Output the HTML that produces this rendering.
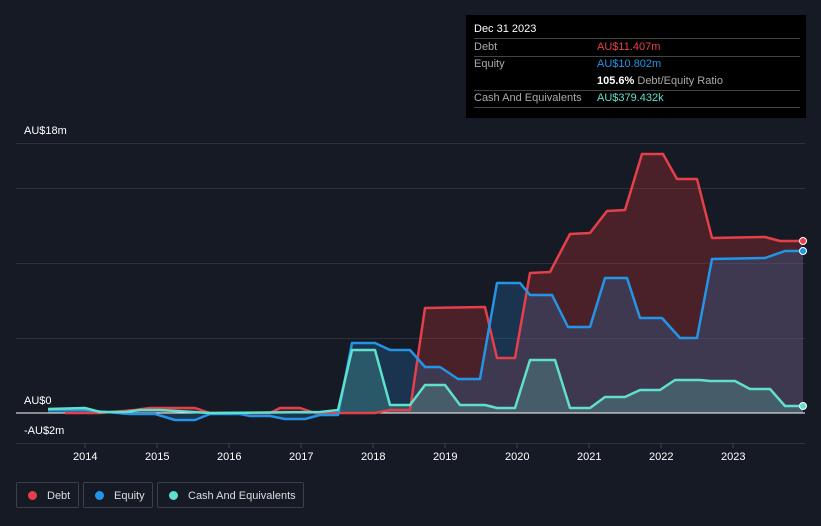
<!DOCTYPE html>
<html><head><style>
body{margin:0;width:821px;height:526px;background:#151a25;font-family:"Liberation Sans",sans-serif;overflow:hidden;position:relative;color:#fff}
.t{position:absolute;font-size:11px}
.tip{position:absolute;left:466px;top:15px;width:340px;height:103px;background:#000;}
.row{position:absolute;left:8px;width:326px;border-bottom:1px solid #444;font-size:11px;height:17px;line-height:17px}
.lab{color:#aaa;position:absolute;left:0}
.val{position:absolute;left:123px}
.leg{position:absolute;top:482px;height:26px;border:1px solid #3a3f4a;border-radius:2px;font-size:11px;color:#ddd;line-height:26px;box-sizing:border-box}
.dot{display:inline-block;width:9px;height:9px;border-radius:50%;margin:0 10px 0 11px;vertical-align:-1px}
</style></head><body>
<svg width="821" height="526" style="position:absolute;left:0;top:0">
<g stroke="#2c313c" stroke-width="1">
<line x1="16" y1="143.5" x2="805" y2="143.5"/><line x1="16" y1="188.5" x2="805" y2="188.5"/><line x1="16" y1="263.5" x2="805" y2="263.5"/><line x1="16" y1="338.5" x2="805" y2="338.5"/><line x1="16" y1="443.5" x2="805" y2="443.5"/>
</g>
<g stroke="#444" ><line x1="85" y1="443" x2="85" y2="448"/><line x1="157" y1="443" x2="157" y2="448"/><line x1="229" y1="443" x2="229" y2="448"/><line x1="301" y1="443" x2="301" y2="448"/><line x1="373" y1="443" x2="373" y2="448"/><line x1="445" y1="443" x2="445" y2="448"/><line x1="517" y1="443" x2="517" y2="448"/><line x1="589" y1="443" x2="589" y2="448"/><line x1="661" y1="443" x2="661" y2="448"/><line x1="733" y1="443" x2="733" y2="448"/></g>
<polygon fill="rgba(200,50,50,0.3)" points="65,413 100,413 135,410 150,408 195,408 210,413 270,413 280,408 300,408 315,413 375,413 390,410 410,410 425,308 485,307 497,358 515,358 530,273 550,272 570,234 590,233 607,211 625,210 642,154 663,154 677,179 697,179 712,238 765,237 780,241 803,241 803,413"/>
<polygon fill="rgba(40,110,180,0.3)" points="48,410 85,410 95,411 130,414 155,414 175,420 195,420 210,414 240,414 250,416 270,416 285,419 305,419 320,415 338,415 352,343 375,343 390,350 410,350 425,367 440,367 458,379 480,379 497,283 520,283 530,295 552,295 568,327 590,327 605,278 627,278 640,318 662,318 680,338 697,338 712,259 765,258 785,251 803,251 803,413 48,413"/>
<polygon fill="rgba(90,200,180,0.25)" points="48,409 85,408 100,412 125,412 140,410 160,410 210,413 320,412 338,410 352,350 375,350 390,405 410,405 425,385 445,385 460,405 485,405 497,408 515,408 530,360 555,360 570,408 590,408 605,397 625,397 640,390 660,390 675,380 700,380 710,381 735,381 750,389 770,389 785,406 803,406 803,413 48,413"/>
<line x1="16" y1="413" x2="805" y2="413" stroke="#fff" stroke-width="1"/>
<g fill="none" stroke-width="2.5" stroke-linejoin="round">
<polyline stroke="#e5404a" points="65,413 100,413 135,410 150,408 195,408 210,413 270,413 280,408 300,408 315,413 375,413 390,410 410,410 425,308 485,307 497,358 515,358 530,273 550,272 570,234 590,233 607,211 625,210 642,154 663,154 677,179 697,179 712,238 765,237 780,241 803,241"/>
<polyline stroke="#2394e6" points="48,410 85,410 95,411 130,414 155,414 175,420 195,420 210,414 240,414 250,416 270,416 285,419 305,419 320,415 338,415 352,343 375,343 390,350 410,350 425,367 440,367 458,379 480,379 497,283 520,283 530,295 552,295 568,327 590,327 605,278 627,278 640,318 662,318 680,338 697,338 712,259 765,258 785,251 803,251"/>
<polyline stroke="#5fe0cc" points="48,409 85,408 100,412 125,412 140,410 160,410 210,413 320,412 338,410 352,350 375,350 390,405 410,405 425,385 445,385 460,405 485,405 497,408 515,408 530,360 555,360 570,408 590,408 605,397 625,397 640,390 660,390 675,380 700,380 710,381 735,381 750,389 770,389 785,406 803,406"/>
</g>
<circle cx="803" cy="241" r="3.5" fill="#e5404a" stroke="#fff" stroke-width="1"/>
<circle cx="803" cy="251" r="3.5" fill="#2394e6" stroke="#fff" stroke-width="1"/>
<circle cx="803" cy="406" r="3.5" fill="#5fe0cc" stroke="#fff" stroke-width="1"/>
</svg>
<div class="t" style="left:24px;top:125px">AU$18m</div>
<div class="t" style="left:24px;top:395px">AU$0</div>
<div class="t" style="left:24px;top:425px">-AU$2m</div>
<div class="t" style="left:73px;top:451px">2014</div><div class="t" style="left:145px;top:451px">2015</div><div class="t" style="left:217px;top:451px">2016</div><div class="t" style="left:289px;top:451px">2017</div><div class="t" style="left:361px;top:451px">2018</div><div class="t" style="left:433px;top:451px">2019</div><div class="t" style="left:505px;top:451px">2020</div><div class="t" style="left:577px;top:451px">2021</div><div class="t" style="left:649px;top:451px">2022</div><div class="t" style="left:721px;top:451px">2023</div>
<div class="tip">
<div class="row" style="top:6px;color:#fff">Dec 31 2023</div>
<div class="row" style="top:24px"><span class="lab">Debt</span><span class="val" style="color:#e5404a">AU$11.407m</span></div>
<div class="row" style="top:41px;border:none"><span class="lab">Equity</span><span class="val" style="color:#2394e6">AU$10.802m</span></div>
<div class="row" style="top:58px"><span class="val"><b>105.6%</b> <span style="color:#aaa">Debt/Equity Ratio</span></span></div>
<div class="row" style="top:75px"><span class="lab">Cash And Equivalents</span><span class="val" style="color:#5fe0cc">AU$379.432k</span></div>
</div>
<div class="leg" style="left:16px;width:63px"><span class="dot" style="background:#e5404a"></span>Debt</div>
<div class="leg" style="left:83px;width:70px"><span class="dot" style="background:#2394e6"></span>Equity</div>
<div class="leg" style="left:157px;width:147px"><span class="dot" style="background:#5fe0cc"></span>Cash And Equivalents</div>
</body></html>
